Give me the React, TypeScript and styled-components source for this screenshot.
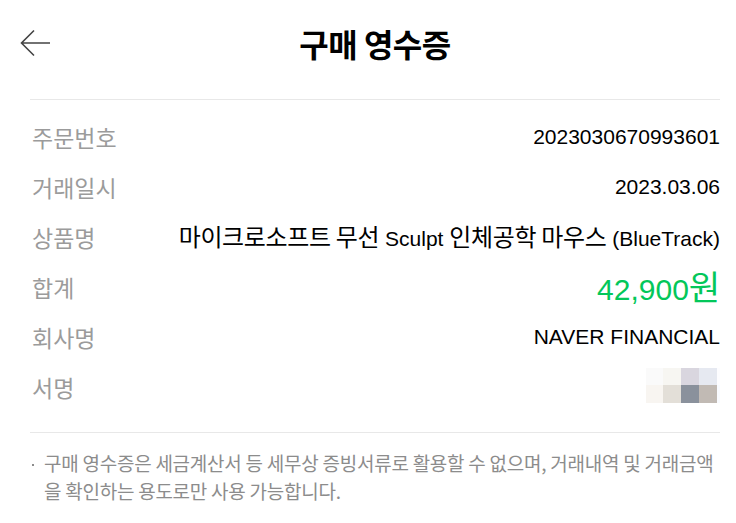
import styled, { createGlobalStyle } from "styled-components"

const GlobalStyle = createGlobalStyle`
  html, body {
    margin: 0;
    padding: 0;
    background: #fff;
  }
  body {
    font-family: "Liberation Sans", Arial, "Noto Sans CJK KR", sans-serif;
    color: #000;
  }
`

const Page = styled.div`
  width: 736px;
  padding: 0 16px 0 30px;
  box-sizing: border-box;
`

const Header = styled.header`
  display: grid;
  grid-template-columns: 40px 1fr 40px;
  align-items: center;
  padding: 23px 0 36px;
  border-bottom: 1px solid #e8e8e8;
`

const BackButton = styled.button`
  display: flex;
  align-items: center;
  margin-left: -10px;
  padding: 0;
  border: 0;
  background: none;
  width: 32px;
  height: 40px;
  cursor: pointer;
`

const Title = styled.h1`
  margin: 0;
  text-align: center;
  font-family: "Noto Sans CJK KR", sans-serif;
  font-size: 32px;
  font-weight: 700;
  line-height: 40px;
  letter-spacing: -0.5px;
`

const List = styled.dl`
  margin: 0;
  padding: 12px 0 20px;
  border-bottom: 1px solid #e8e8e8;
`

const Row = styled.div`
  display: flex;
  align-items: center;
  justify-content: space-between;
  height: 50px;
`

const Label = styled.dt`
  font-family: "Noto Sans CJK KR", sans-serif;
  font-size: 23px;
  color: #9b9b9b;
  margin: 0 0 0 2px;
  white-space: nowrap;
`

const Value = styled.dd<{ $accent?: boolean }>`
  margin: 0;
  text-align: right;
  font-family: "Liberation Sans", Arial, "Noto Sans CJK KR", sans-serif;
  font-size: ${(p) => (p.$accent ? "30px" : "21px")};
  color: ${(p) => (p.$accent ? "#03c75a" : "#000")};
  white-space: nowrap;
`

const Ko = styled.span`
  font-family: "Noto Sans CJK KR", sans-serif;
  font-size: 1.14em;
  line-height: 1;
  letter-spacing: -0.3px;
`

const Signature = styled.div`
  display: grid;
  grid-template-columns: 17px 18px 18px 18px 3px;
  grid-template-rows: 17px 18px;
  margin-top: -4px;
`

const Pixel = styled.span<{ $c: string }>`
  background: ${(p) => p.$c};
`

const Notice = styled.ul`
  list-style: none;
  margin: 0;
  padding: 16px 0 0;
`

const NoticeItem = styled.li`
  position: relative;
  padding-left: 14px;
  font-family: "Noto Sans CJK KR", sans-serif;
  font-size: 19px;
  line-height: 28px;
  color: #8c8c8c;
  letter-spacing: -0.25px;

  &::before {
    content: "";
    position: absolute;
    left: 2px;
    top: 15px;
    width: 2px;
    height: 2px;
    background: #8c8c8c;
  }
`

const signaturePixels = [
  "#fafafa", "#f7f6f2", "#d9d6df", "#e6e9f1", "#fdfdff",
  "#f8f5f1", "#e3dfd8", "#8a919c", "#c1bab4", "#f9fbff",
]

export default function App() {
  return (
    <>
      <GlobalStyle />
      <Page>
        <Header>
          <BackButton aria-label="뒤로">
            <svg width="32" height="28" viewBox="0 0 32 28" fill="none">
              <path d="M2 14h28M14 1.5L1.5 14 14 26.5" stroke="#444" strokeWidth="1.6" />
            </svg>
          </BackButton>
          <Title>구매 영수증</Title>
          <span />
        </Header>

        <List>
          <Row>
            <Label>주문번호</Label>
            <Value>2023030670993601</Value>
          </Row>
          <Row>
            <Label>거래일시</Label>
            <Value>2023.03.06</Value>
          </Row>
          <Row>
            <Label>상품명</Label>
            <Value>
              <Ko>마이크로소프트 무선</Ko> Sculpt <Ko>인체공학 마우스</Ko> (BlueTrack)
            </Value>
          </Row>
          <Row>
            <Label>합계</Label>
            <Value $accent>
              42,900<Ko>원</Ko>
            </Value>
          </Row>
          <Row>
            <Label>회사명</Label>
            <Value>NAVER FINANCIAL</Value>
          </Row>
          <Row>
            <Label>서명</Label>
            <Signature>
              {signaturePixels.map((c, i) => (
                <Pixel key={i} $c={c} />
              ))}
            </Signature>
          </Row>
        </List>

        <Notice>
          <NoticeItem>
            구매 영수증은 세금계산서 등 세무상 증빙서류로 활용할 수 없으며, 거래내역 및 거래금액을 확인하는 용도로만 사용 가능합니다.
          </NoticeItem>
        </Notice>
      </Page>
    </>
  )
}
